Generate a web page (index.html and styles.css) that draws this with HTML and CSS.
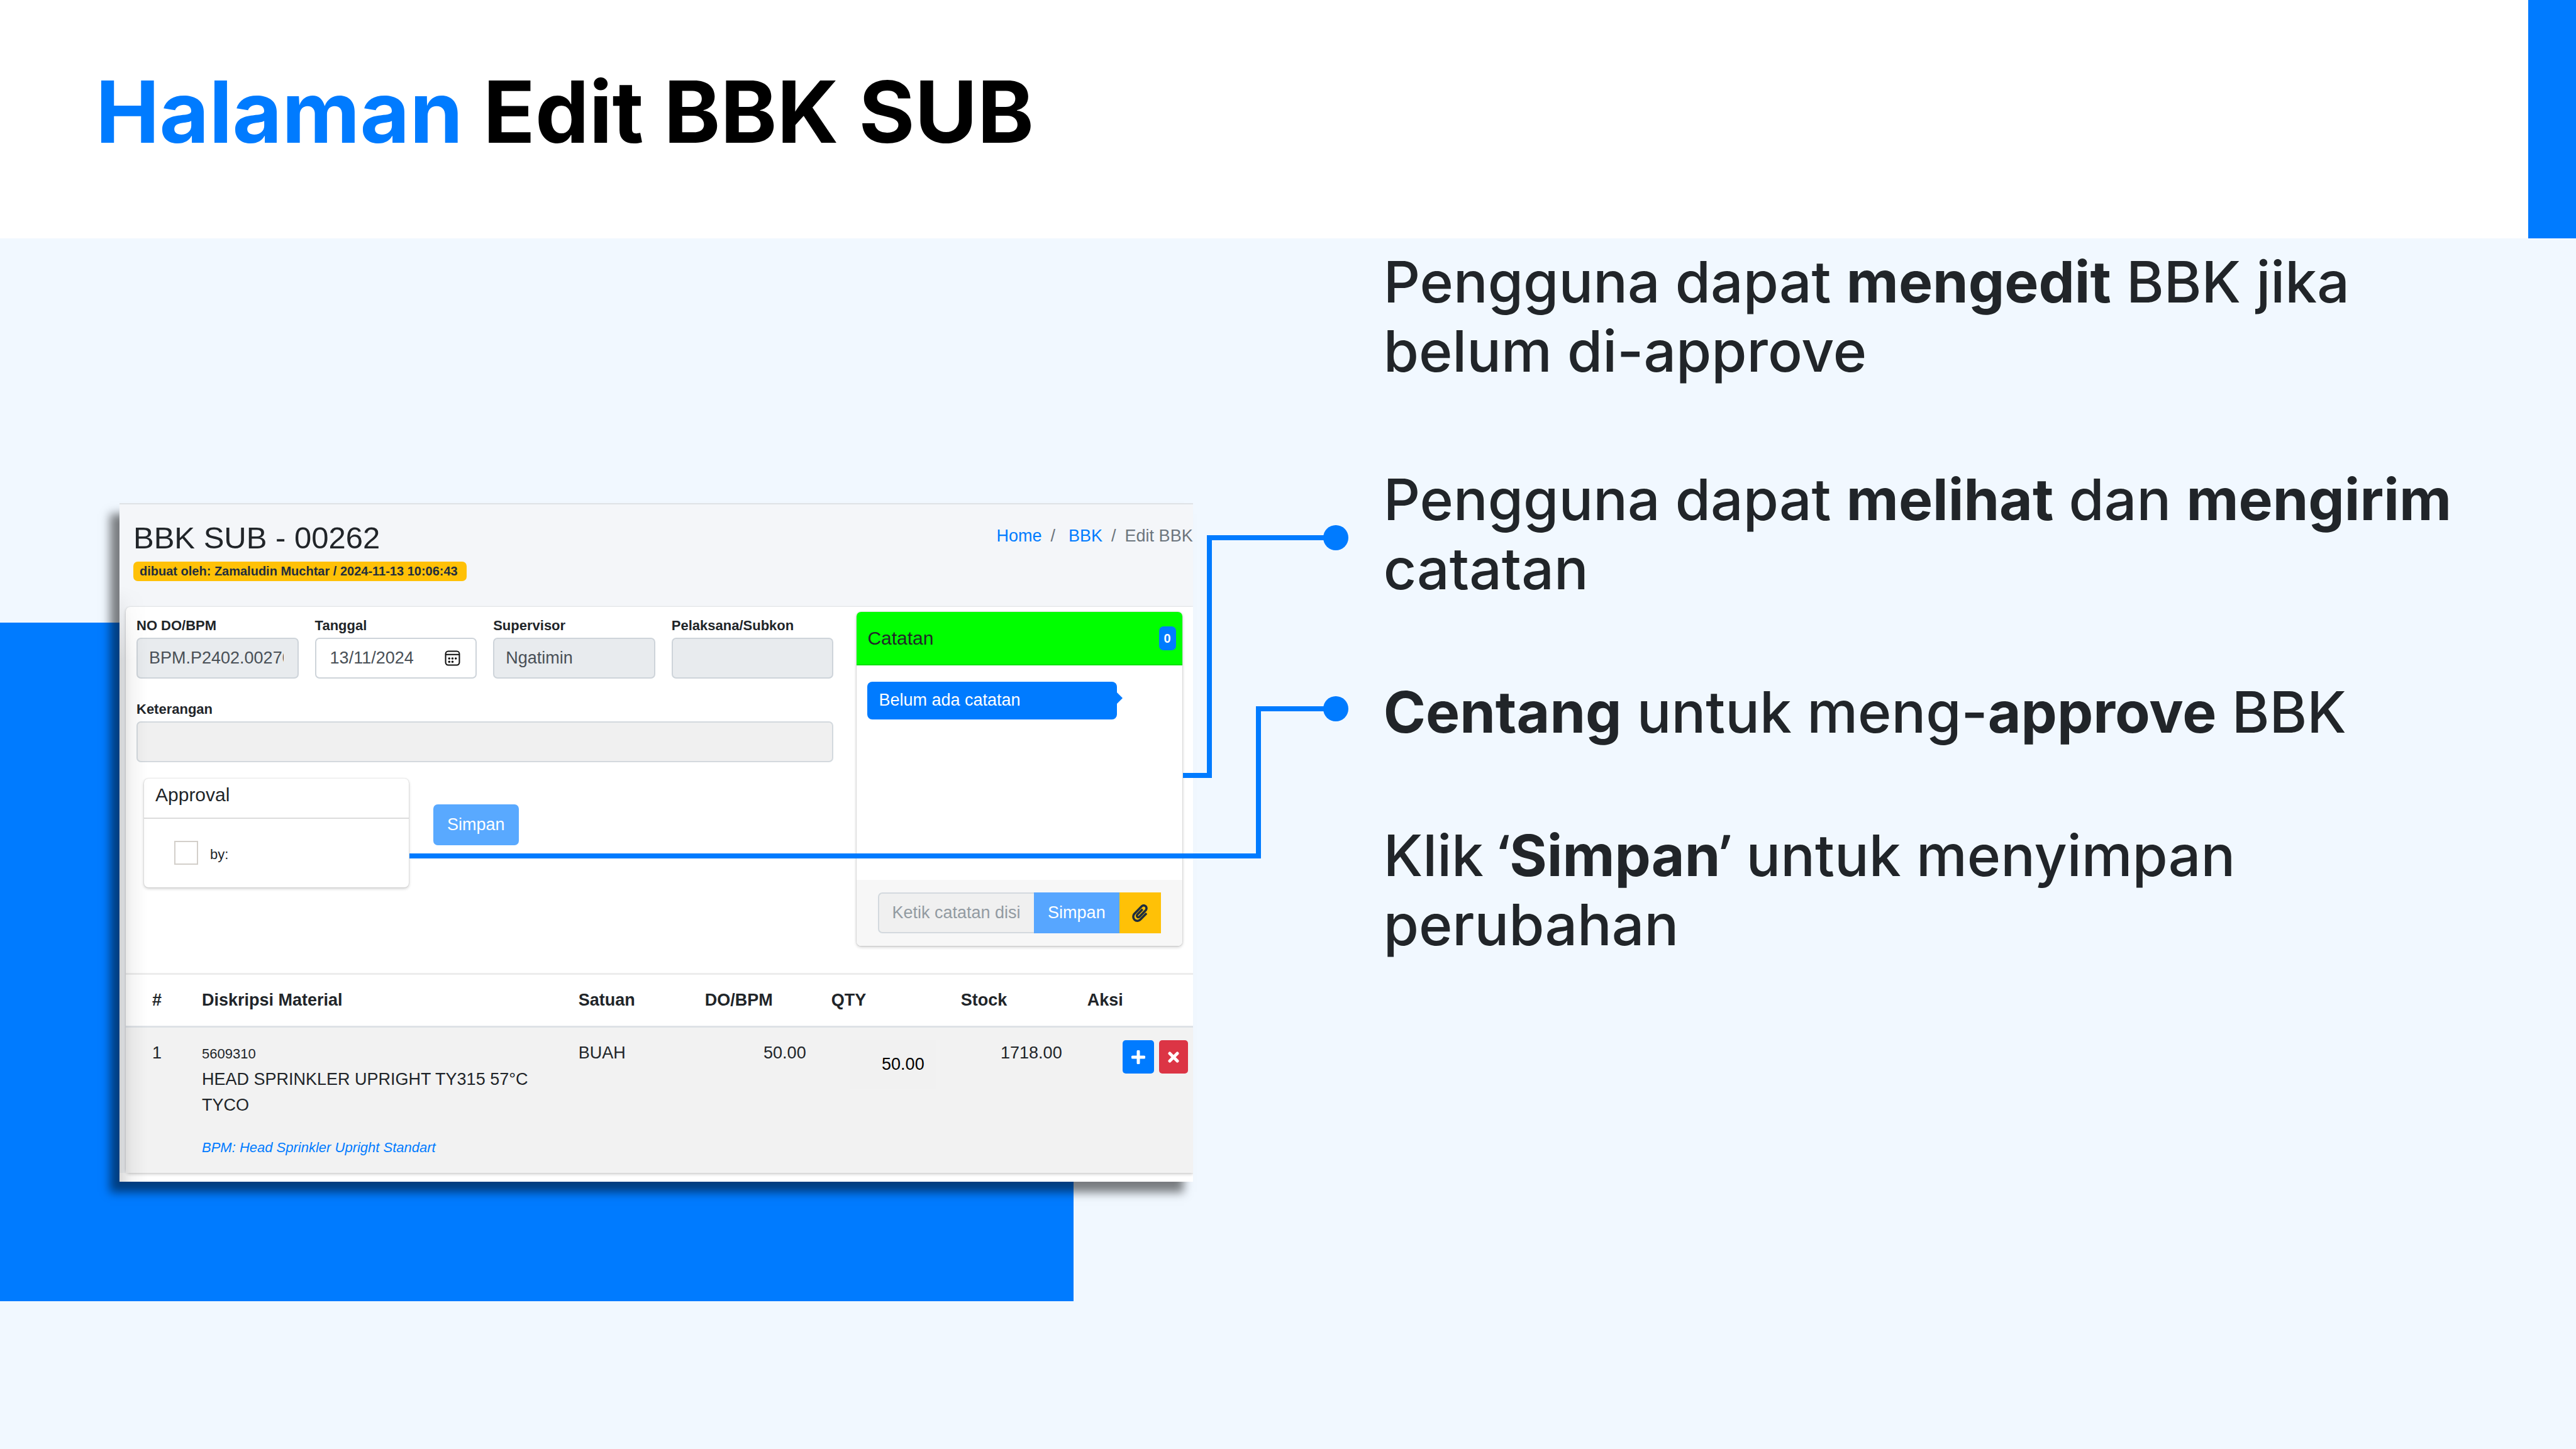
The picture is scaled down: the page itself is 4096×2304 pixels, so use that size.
FILE: index.html
```html
<!DOCTYPE html>
<html lang="id">
<head>
<meta charset="utf-8">
<meta name="viewport" content="width=device-width, initial-scale=1">
<title>Halaman Edit BBK SUB</title>
<link rel="stylesheet" href="styles.css">
</head>
<body>
<header class="slide-header">
  <h1 class="slide-title"><span class="accent">Halaman</span> Edit BBK SUB</h1>
  <div class="header-bar"></div>
</header>

<main class="slide-main">
  <div class="figure">
    <section class="shot">
      <div class="content-header">
        <div>
          <h2 class="page-title">BBK SUB - 00262</h2>
          <span class="badge badge-warning">dibuat oleh: Zamaludin Muchtar / 2024-11-13 10:06:43</span>
        </div>
        <nav class="breadcrumb" aria-label="Breadcrumb">
          <a href="#home">Home</a><span class="sep">/</span>
          <a class="second" href="#bbk">BBK</a><span class="sep">/</span><span>Edit BBK</span>
        </nav>
      </div>

      <div class="content">
        <div class="card">
          <div class="card-top">
            <form class="form">
              <div class="fields">
                <div class="field">
                  <label for="nodo">NO DO/BPM</label>
                  <input class="control" id="nodo" type="text" value="BPM.P2402.00270" readonly>
                </div>
                <div class="field">
                  <label for="tanggal">Tanggal</label>
                  <div class="date">
                    <input class="control control-date" id="tanggal" type="text" value="13/11/2024">
                    <svg class="date-icon" viewBox="0 0 24 24" aria-hidden="true">
                      <rect x="1.500" y="1.500" width="21" height="21" rx="4" fill="none" stroke="#111" stroke-width="2"/>
                      <path d="M2 6.500h20" stroke="#111" stroke-width="2"/>
                      <g fill="#111"><circle cx="7" cy="12.500" r="1.700"/><circle cx="12" cy="12.500" r="1.700"/><circle cx="17" cy="12.500" r="1.700"/><circle cx="7" cy="17.500" r="1.700"/><circle cx="12" cy="17.500" r="1.700"/></g>
                    </svg>
                  </div>
                </div>
                <div class="field">
                  <label for="supervisor">Supervisor</label>
                  <input class="control" id="supervisor" type="text" value="Ngatimin" readonly>
                </div>
                <div class="field">
                  <label for="pelaksana">Pelaksana/Subkon</label>
                  <input class="control" id="pelaksana" type="text" readonly>
                </div>
                <div class="field field-wide">
                  <label for="keterangan">Keterangan</label>
                  <input class="control control-off" id="keterangan" type="text" disabled>
                </div>
              </div>
              <div class="approval-row">
                <div class="approval">
                  <h3 class="approval-title">Approval</h3>
                  <div class="approval-body">
                    <input class="tick" id="approve" type="checkbox">
                    <label class="by" for="approve">by:</label>
                  </div>
                </div>
                <button class="btn btn-save" type="button">Simpan</button>
              </div>
            </form>

            <section class="notes">
              <div class="notes-head">
                <h3 class="notes-title">Catatan</h3>
                <span class="badge badge-count">0</span>
              </div>
              <div class="notes-body">
                <p class="bubble">Belum ada catatan</p>
              </div>
              <div class="notes-foot">
                <input class="control control-off control-note" type="text" aria-label="Catatan" placeholder="Ketik catatan disini" disabled>
                <button class="btn btn-send" type="button">Simpan</button>
                <button class="btn btn-attach" type="button" aria-label="Lampiran">
                  <svg class="clip" viewBox="0 0 448 512" aria-hidden="true"><path fill="#1f2d3d" d="M43.246 466.142c-58.43-60.289-57.341-157.511 1.386-217.581L254.392 34c44.316-45.332 116.351-45.336 160.671 0 43.890 44.894 43.943 117.329 0 162.276L232.214 383.128c-29.855 30.537-78.633 30.111-107.982-.998-28.275-29.970-27.368-77.473 1.452-106.953l143.743-146.835c6.182-6.314 16.312-6.422 22.626-.241l22.861 22.379c6.315 6.182 6.422 16.312.241 22.626L171.427 319.927c-4.932 5.045-5.236 13.428-.648 18.292 4.372 4.634 11.245 4.711 15.688.165l182.849-186.851c19.613-20.062 19.613-52.725-.011-72.798-19.189-19.627-49.957-19.637-69.154 0L90.390 293.295c-34.763 35.560-35.299 93.120-1.191 128.313 34.010 35.093 88.985 35.137 123.058.286l172.060-175.999c6.177-6.319 16.307-6.433 22.626-.256l22.877 22.364c6.319 6.177 6.434 16.307.256 22.626l-172.060 175.998c-59.576 60.938-155.943 60.216-214.770-.485z"/></svg>
                </button>
              </div>
            </section>
          </div>

          <table class="items">
            <colgroup>
              <col class="c-no"><col class="c-desc"><col class="c-std"><col class="c-std"><col class="c-qty"><col class="c-std"><col class="c-act">
            </colgroup>
            <thead>
              <tr><th class="center">#</th><th>Diskripsi Material</th><th>Satuan</th><th>DO/BPM</th><th>QTY</th><th>Stock</th><th>Aksi</th></tr>
            </thead>
            <tbody>
              <tr>
                <td class="center">1</td>
                <td>
                  <small>5609310</small><br>HEAD SPRINKLER UPRIGHT TY315 57°C<br>TYCO
                  <p class="bpm">BPM: Head Sprinkler Upright Standart</p>
                </td>
                <td>BUAH</td>
                <td class="right">50.00</td>
                <td class="right"><input class="qty" type="text" value="50.00" aria-label="QTY"></td>
                <td class="right">1718.00</td>
                <td class="actions-cell">
                  <div class="actions">
                    <button class="btn btn-add" type="button" aria-label="Tambah"><svg viewBox="0 0 22 22" width="22" height="22" aria-hidden="true"><path d="M11 2v18M2 11h18" stroke="#fff" stroke-width="5" stroke-linecap="round"/></svg></button>
                    <button class="btn btn-del" type="button" aria-label="Hapus"><svg viewBox="0 0 18 18" width="18" height="18" aria-hidden="true"><path d="M3 3l12 12M15 3L3 15" stroke="#fff" stroke-width="5" stroke-linecap="round"/></svg></button>
                  </div>
                </td>
              </tr>
            </tbody>
          </table>
        </div>
      </div>
    </section>
  </div>

  <div class="steps">
    <p class="step step-intro">Pengguna dapat <b>mengedit</b> BBK jika belum di-approve</p>
    <p class="step">Pengguna dapat <b>melihat</b> dan <b>mengirim</b> catatan</p>
    <p class="step"><b>Centang</b> untuk meng-<b>approve</b> BBK</p>
    <p class="step">Klik <span class="quote">‘</span><b>Simpan</b><span class="quote">’</span> untuk menyimpan perubahan</p>
  </div>

  <svg class="connectors" viewBox="0 0 4096 1925" aria-hidden="true">
    <g fill="none" stroke="#007bff" stroke-width="8">
      <path d="M1881 854H1923V476H2124"/>
      <path d="M651 982H2001V748H2124"/>
    </g>
    <circle cx="2124" cy="476" r="20" fill="#007bff"/>
    <circle cx="2124" cy="748" r="20" fill="#007bff"/>
  </svg>
</main>
</body>
</html>
```
FILE: styles.css
```css
*, *::before, *::after { box-sizing: border-box; }

body {
  margin: 0;
  min-height: 100vh;
  display: flex;
  flex-direction: column;
  background: #f1f8ff;
  color: #212529;
  font-family: "Liberation Sans", Arial, sans-serif;
  font-size: 27px;
  line-height: 41px;
}

h1, h2, h3, p { margin: 0; font-weight: 400; }
a { color: #007bff; text-decoration: none; }
input, button { font: inherit; margin: 0; }

/* Slide heading */
.slide-header {
  display: flex;
  justify-content: space-between;
  height: 379px;
  background: #fff;
}
.slide-title {
  padding: 95px 0 0 152px;
  font-family: Inter, sans-serif;
  font-size: 136px;
  line-height: 166px;
  font-weight: 700;
  color: #000;
}
.accent { color: #007bff; }
.header-bar { width: 76px; background: #007bff; }

/* Slide body */
.slide-main {
  position: relative;
  flex: 1;
  display: grid;
  grid-template-columns: 5fr 7fr;
  align-items: start;
}
.figure {
  position: relative;
  isolation: isolate;
  margin: 421px -190px 0 190px;
}
.figure::before {
  content: "";
  position: absolute;
  z-index: -1;
  top: 190px;
  left: -190px;
  width: 100%;
  height: 100%;
  background: #007bff;
}
.connectors {
  position: absolute;
  top: 0;
  left: 0;
  width: 100%;
  pointer-events: none;
}

.steps {
  display: flex;
  flex-direction: column;
  gap: 118px;
  padding: 14px 150px 0 493px;
}
.step {
  font-family: Inter, sans-serif;
  font-size: 91px;
  line-height: 110px;
  font-weight: 500;
}
.step-intro { padding-bottom: 8px; }
.step b { font-weight: 700; }
.quote { font-family: "Noto Sans", sans-serif; font-weight: 500; line-height: 1px; }

/* Application window */
.shot {
  position: relative;
  overflow: hidden;
  padding-bottom: 14px;
  border-top: 2px solid #dee2e6;
  background: #fff;
  box-shadow: -15px 17px 14px rgba(0, 0, 0, .5);
}
.shot::after {
  content: "";
  position: absolute;
  top: 130px;
  bottom: 0;
  left: 0;
  width: 44px;
  background: linear-gradient(to right, rgba(0, 0, 0, .14), rgba(0, 0, 0, .04) 45%, transparent);
  mask-image: linear-gradient(to bottom, transparent, #000 120px);
  pointer-events: none;
}
.content-header {
  display: flex;
  justify-content: space-between;
  height: 163px;
  padding: 24px 0 0 22px;
  background: #f4f6f9;
}
.page-title { font-size: 49px; line-height: 59px; margin-bottom: 8px; }
.badge {
  display: block;
  width: max-content;
  border-radius: 7px;
  font-size: 20px;
  font-weight: 700;
}
.badge-warning { padding: 0 14px 0 10px; line-height: 31px; background: #ffc107; color: #1f2d3d; }
.breadcrumb { display: flex; padding-top: 6px; color: #6c757d; }
.sep { padding: 0 14px; }
.breadcrumb .second { padding-left: 7px; }

.content { padding-left: 10px; background: #f4f6f9; }
.card {
  background: #fff;
  border-radius: 7px 0 0 7px;
  box-shadow: 0 0 2px rgba(0, 0, 0, .13), 0 2px 5px rgba(0, 0, 0, .2);
}
.card-top {
  display: grid;
  grid-template-columns: 15fr 7fr;
  gap: 37px;
  padding: 8px 17px 43px 17px;
}

/* Form */
.form { padding-top: 5px; }
.fields {
  display: grid;
  grid-template-columns: repeat(4, 1fr);
  gap: 32px 26px;
}
.field-wide { grid-column: 1 / -1; }
.field label {
  display: block;
  margin-bottom: 3px;
  font-size: 22px;
  line-height: 33px;
  font-weight: 700;
}
.control {
  display: block;
  width: 100%;
  height: 65px;
  padding: 0 22px 0 18px;
  border: 2px solid #ced4da;
  border-radius: 7px;
  background: #e8ebee;
  color: #495057;
  line-height: 41px;
}
.control-off { background: #f0f0f0; border-color: #d3d9de; }
.control::placeholder { color: #939ba2; opacity: 1; }
.date { position: relative; }
.control-date { padding-left: 22px; background: #fff; }
.date-icon { position: absolute; top: 20px; right: 26px; width: 25px; height: 25px; }

.btn {
  display: flex;
  align-items: center;
  justify-content: center;
  padding: 0 22px;
  border: 0;
  border-radius: 7px;
  color: #fff;
}

.approval-row { display: flex; align-items: flex-start; gap: 39px; padding: 26px 0 0 12px; }
.approval {
  width: 421px;
  height: 173px;
  border-radius: 7px;
  background: #fff;
  box-shadow: 0 0 2px rgba(0, 0, 0, .2), 0 2px 5px rgba(0, 0, 0, .2);
}
.approval-title {
  padding: 8px 18px 18px;
  border-bottom: 2px solid #dcdcdc;
  font-size: 30px;
  line-height: 36px;
}
.approval-body { display: flex; align-items: flex-end; gap: 19px; padding: 35px 0 0 48px; }
.tick {
  appearance: none;
  width: 38px;
  height: 38px;
  border: 2px solid #d3cfca;
  background: #fff;
}
.by { font-size: 22px; line-height: 33px; }
.btn-save { height: 65px; margin-top: 41px; background: #59a9ff; }

/* Notes */
.notes {
  display: flex;
  flex-direction: column;
  height: 531px;
  border-radius: 7px;
  overflow: hidden;
  background: #fff;
  box-shadow: 0 0 2px rgba(0, 0, 0, .25), 0 2px 5px rgba(0, 0, 0, .2);
}
.notes-head {
  display: flex;
  align-items: center;
  justify-content: space-between;
  height: 85px;
  padding: 0 10px 0 17px;
  border-bottom: 2px solid #00df00;
  background: #0f0;
}
.notes-title { font-size: 30px; line-height: 36px; }
.badge-count { padding: 0 8px; line-height: 38px; background: #007bff; color: #fff; }
.notes-body { flex: 1; padding: 26px 17px; }
.bubble {
  position: relative;
  width: 82%;
  padding: 9px 18px 10px;
  border-radius: 8px;
  background: #007bff;
  color: #fff;
}
.bubble::after {
  content: "";
  position: absolute;
  top: 17px;
  left: 100%;
  border: 9px solid transparent;
  border-left-color: #007bff;
  border-right-width: 0;
}
.notes-foot { display: flex; padding: 20px 34px; background: #f7f7f7; }
.control-note { flex: 1; min-width: 0; padding: 0 22px 0 20px; border-right: 0; border-radius: 7px 0 0 7px; }
.btn-send { border-radius: 0; background: #57a6ff; }
.btn-attach { width: 66px; padding: 0; border-radius: 0; background: #ffc107; }
.clip { width: 25px; height: 28px; }

/* Items */
.items {
  width: 100%;
  table-layout: fixed;
  border-collapse: collapse;
  border-top: 3px solid #ececec;
}
.c-no { width: 101px; }
.c-std { width: 201px; }
.c-qty { width: 206px; }
.c-act { width: 188px; }
.items th, .items td { padding: 20px; text-align: left; vertical-align: top; }
.items th { border-bottom: 3px solid #dee2e6; font-weight: 700; }
.items tbody { background: #f2f2f2; }
.items .center { padding-right: 22px; text-align: center; }
.items .right { text-align: right; }
.items small { font-size: 22px; }
.bpm { margin-top: 26px; font-size: 22px; font-style: italic; color: #007bff; }
.qty {
  width: 136px;
  height: 77px;
  padding: 0 18px;
  border: 0;
  background: #f1f1f1;
  color: #000;
  text-align: right;
  vertical-align: top;
}
.items .actions-cell { padding-right: 8px; }
.actions { display: flex; justify-content: flex-end; gap: 8px; }
.actions .btn { height: 53px; padding: 0 14px; border-radius: 5px; }
.btn-add { background: #007bff; }
.btn-del { background: #dc3545; }
```
